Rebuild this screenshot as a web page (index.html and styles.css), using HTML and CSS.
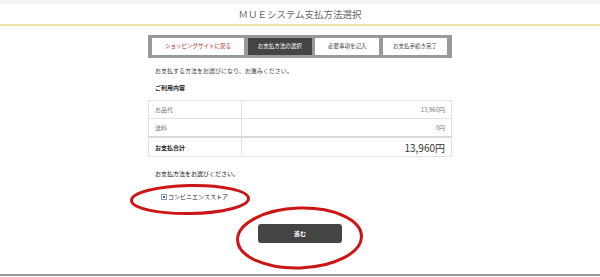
FILE: index.html
```html
<!DOCTYPE html>
<html lang="ja">
<head>
  <meta charset="UTF-8">
  <meta name="viewport" content="width=device-width, initial-scale=1.0">
  <title>MUEシステム支払方法選択</title>
  <link rel="stylesheet" href="styles.css">
</head>
<body>
  <div class="topbar"></div>
  <header class="title">ＭＵＥシステム支払方法選択</header>

  <div class="content">
    <ul class="steps">
      <li class="step back">ショッピングサイトに戻る</li>
      <li class="step current">お支払方法の選択</li>
      <li class="step">必要事項を記入</li>
      <li class="step">お支払手続き完了</li>
    </ul>

    <p class="lead">お支払する方法をお選びになり、お進みください。</p>
    <h2 class="section">ご利用内容</h2>

    <table class="summary">
      <tr>
        <th>お品代</th>
        <td>13,960円</td>
      </tr>
      <tr>
        <th>送料</th>
        <td>0円</td>
      </tr>
      <tr class="total">
        <th>お支払合計</th>
        <td>13,960円</td>
      </tr>
    </table>

    <p class="lead ask">お支払方法をお選びください。</p>
    <label class="method"><span class="check"></span>コンビニエンスストア</label>

    <div class="actions">
      <button class="next-btn">進む</button>
    </div>
  </div>

  <div class="bottom-line"></div>

  <!-- 赤丸の書き込み -->
  <svg class="marks" width="600" height="277" viewBox="0 0 600 277">
    <ellipse cx="190" cy="199.5" rx="58.5" ry="14" transform="rotate(-1 190 199.5)" />
    <ellipse cx="299.5" cy="238" rx="62" ry="30" transform="rotate(-2 299.5 238)" />
  </svg>
</body>
</html>
```

FILE: styles.css
```css
body {
  margin: 0;
  font-family: "Noto Sans CJK JP", "Noto Sans", sans-serif;
  background: #fff;
  color: #333;
  position: relative;
  height: 277px;
  overflow: hidden;
}
.topbar {
  height: 4px;
  background: #f2f2f2;
}
.title {
  height: 20px;
  line-height: 20px;
  text-align: center;
  font-size: 9.5px;
  color: #666;
  border-bottom: 2px solid #eddfa8;
}
.content {
  width: 304px;
  margin: 0 auto;
}
.steps {
  list-style: none;
  margin: 9px 0 0;
  padding: 3px 5px 3px 4px;
  background: #999;
  display: flex;
  justify-content: space-between;
}
.step {
  height: 17px;
  line-height: 17px;
  background: #fff;
  text-align: center;
  font-size: 5.5px;
  color: #444;
  width: 64px;
}
.step.back {
  width: 92px;
  color: #b02020;
}
.step.current {
  background: #444;
  color: #fff;
}
.lead {
  margin: 9px 0 0 7px;
  font-size: 6px;
  line-height: 8px;
  color: #444;
}
.section {
  margin: 9px 0 0 7px;
  font-size: 6px;
  line-height: 8px;
  font-weight: bold;
  color: #222;
}
.summary {
  width: 100%;
  margin-top: 8px;
  border-collapse: collapse;
  font-size: 6px;
}
.summary th,
.summary td {
  border: 1px solid #e2e2e2;
  height: 17px;
  padding: 0 6px;
}
.summary th {
  width: 80px;
  text-align: left;
  font-weight: normal;
  color: #777;
}
.summary td {
  text-align: right;
  color: #777;
}
.summary .total th,
.summary .total td {
  border-top: 2px solid #d8d8d8;
  height: 18px;
}
.summary .total th {
  font-weight: bold;
  color: #222;
}
.summary .total td {
  font-size: 10px;
  color: #333;
}
.ask {
  margin-top: 13px;
  color: #222;
}
.method {
  display: flex;
  align-items: center;
  margin: 15px 0 0 13px;
  font-size: 6px;
  line-height: 8px;
  color: #222;
}
.check {
  width: 4px;
  height: 4px;
  border: 1px solid #8899bb;
  background: #3a5a9a;
  box-shadow: inset 0 0 0 1px #fff;
  margin-right: 1px;
}
.actions {
  display: flex;
  justify-content: center;
  margin-top: 23px;
}
.next-btn {
  width: 84px;
  height: 19px;
  border: none;
  border-radius: 3px;
  background: #444;
  color: #fff;
  font-family: inherit;
  font-size: 6px;
  font-weight: bold;
  cursor: pointer;
}
.bottom-line {
  position: absolute;
  left: 0;
  right: 0;
  top: 274px;
  height: 2px;
  background: #999;
}
.marks {
  position: absolute;
  left: 0;
  top: 0;
  pointer-events: none;
}
.marks ellipse {
  fill: none;
  stroke: #cc1515;
  stroke-width: 3;
}
```
